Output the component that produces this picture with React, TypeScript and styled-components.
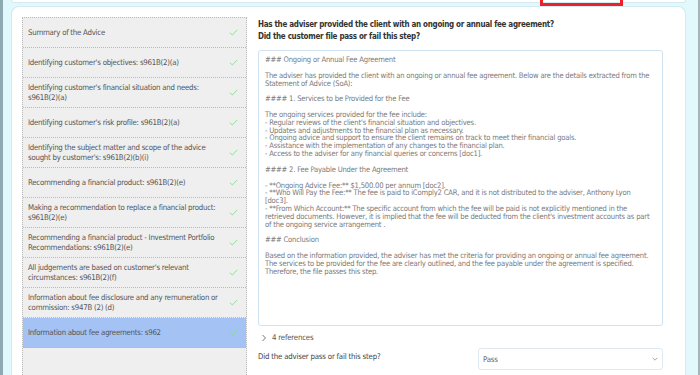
import React from 'react'
import styled, { createGlobalStyle } from 'styled-components';

const GlobalStyle = createGlobalStyle`
  html, body {
    margin: 0;
    padding: 0;
    height: 375px;
    overflow: hidden;
    background: #e1f8fc;
  }
  body {
    font-family: "Liberation Sans Narrow", "DejaVu Sans Condensed", "Liberation Sans", sans-serif;
  }
`

const steps = [
  'Summary of the Advice',
  "Identifying customer's objectives: s961B(2)(a)",
  "Identifying customer's  financial situation and needs: s961B(2)(a)",
  "Identifying customer's risk profile: s961B(2)(a)",
  "Identifying the subject matter and scope of the advice sought by customer's: s961B(2)(b)(i)",
  'Recommending a financial product: s961B(2)(e)',
  'Making a recommendation to replace a financial product: s961B(2)(e)',
  'Recommending a financial product - Investment Portfolio Recommendations: s961B(2)(e)',
  "All judgements are based on customer's relevant circumstances: s961B(2)(f)",
  'Information about fee disclosure and any remuneration or commission: s947B (2) (d)',
  'Information about fee agreements: s962',
]

const answer = `### Ongoing or Annual Fee Agreement

The adviser has provided the client with an ongoing or annual fee agreement. Below are the details extracted from the
Statement of Advice (SoA):

#### 1. Services to be Provided for the Fee

The ongoing services provided for the fee include:
- Regular reviews of the client's financial situation and objectives.
- Updates and adjustments to the financial plan as necessary.
- Ongoing advice and support to ensure the client remains on track to meet their financial goals.
- Assistance with the implementation of any changes to the financial plan.
- Access to the adviser for any financial queries or concerns [doc1].

#### 2. Fee Payable Under the Agreement

- **Ongoing Advice Fee:** $1,500.00 per annum [doc2].
- **Who Will Pay the Fee:** The fee is paid to iComply2 CAR, and it is not distributed to the adviser, Anthony Lyon
[doc3].
- **From Which Account:** The specific account from which the fee will be paid is not explicitly mentioned in the
retrieved documents. However, it is implied that the fee will be deducted from the client's investment accounts as part
of the ongoing service arrangement .

### Conclusion

Based on the information provided, the adviser has met the criteria for providing an ongoing or annual fee agreement.
The services to be provided for the fee are clearly outlined, and the fee payable under the agreement is specified.
Therefore, the file passes this step.`

function Check() {
  return (
    <svg width="9" height="7" viewBox="0 0 9 7">
      <path d="M0.8 3.6 L3.3 6 L8.3 0.8" fill="none" stroke="#86df8c" strokeWidth="0.9" />
    </svg>
  )
}

function App() {
  return (
    <>
      <GlobalStyle />
      <Page>
        <TopCard>
          <Highlight />
        </TopCard>
        <MainCard>
          <StepList>
            {steps.map((s, i) => (
              <Step key={i} $active={i === steps.length - 1}>
                <span>{s}</span>
                <Check />
              </Step>
            ))}
          </StepList>
          <Detail>
            <Question>
              Has the adviser provided the client with an ongoing or annual fee agreement?
              <br />
              Did the customer file pass or fail this step?
            </Question>
            <AnswerBox>{answer}</AnswerBox>
            <References>
              <svg width="6" height="8" viewBox="0 0 6 8">
                <path d="M1.5 1 L4.5 4 L1.5 7" fill="none" stroke="#666" strokeWidth="0.9" />
              </svg>
              4 references
            </References>
            <ResultRow>
              <span>Did the adviser pass or fail this step?</span>
              <Select>
                Pass
                <svg width="6" height="4" viewBox="0 0 6 4">
                  <path d="M0.6 0.8 L3 3.2 L5.4 0.8" fill="none" stroke="#999" strokeWidth="0.9" />
                </svg>
              </Select>
            </ResultRow>
          </Detail>
        </MainCard>
      </Page>
    </>
  )
}

export default App;

const Page = styled.div`
  height: 375px;
  box-sizing: border-box;
  overflow: hidden;
  display: flex;
  flex-direction: column;
  border-left: 3px solid #8ea9b2;
  border-right: 2px solid #a7b4b8;
  padding: 0 12px 0 8px;
  background: #e1f8fc;
`

const TopCard = styled.div`
  position: relative;
  height: 2px;
  flex-shrink: 0;
  background: #fff;
  border: 1px solid #d3ebf0;
  border-top: none;
  border-radius: 0 0 6px 6px;
`

const Highlight = styled.div`
  position: absolute;
  left: 528px;
  top: -3px;
  width: 77px;
  height: 6px;
  border: 3px solid #ec2029;
  border-top: none;
`

const MainCard = styled.div`
  margin-top: 3px;
  flex: 1;
  min-height: 0;
  box-sizing: border-box;
  background: #fff;
  border: 1px solid #d3ebf0;
  border-bottom: none;
  border-radius: 8px 8px 0 0;
  padding: 10px 22px 0 10px;
  display: flex;
  gap: 11px;
`

const StepList = styled.div`
  width: 225px;
  flex-shrink: 0;
  box-sizing: border-box;
  background: #efefef;
  border: 1px dotted #b9b9b9;
  border-bottom: none;
`

const Step = styled.div<{ $active?: boolean }>`
  height: 30px;
  box-sizing: border-box;
  border-bottom: 1px dotted #b9b9b9;
  padding: 0 8px 0 5px;
  display: flex;
  align-items: center;
  justify-content: space-between;
  gap: 10px;
  background: ${p => (p.$active ? '#a4c2f4' : 'transparent')};
  color: #555;
  font-size: 7.8px;
  letter-spacing: -0.25px;
  line-height: 10px;

  span {
    flex: 1;
  }

  svg {
    flex-shrink: 0;
  }
`

const Detail = styled.div`
  flex: 1;
  min-width: 0;
  display: flex;
  flex-direction: column;
`

const Question = styled.div`
  font-weight: bold;
  font-size: 8px;
  letter-spacing: -0.3px;
  line-height: 12px;
  color: #333;
  margin-top: 2px;
`

const AnswerBox = styled.div`
  margin-top: 7px;
  height: 276px;
  flex-shrink: 0;
  box-sizing: border-box;
  border: 1px solid #cfe2f2;
  border-radius: 3px;
  padding: 5px 6px;
  white-space: pre;
  overflow: hidden;
  color: #7a7a7a;
  font-size: 7.6px;
  letter-spacing: -0.2px;
  line-height: 7.85px;
`

const References = styled.div`
  display: flex;
  align-items: center;
  gap: 5px;
  margin-top: 7px;
  padding-left: 3px;
  color: #555;
  font-size: 7.8px;
  letter-spacing: -0.2px;
`

const ResultRow = styled.div`
  margin-top: 6px;
  display: flex;
  justify-content: space-between;
  align-items: flex-start;
  color: #444;
  font-size: 7.8px;
  letter-spacing: -0.2px;

  & > span {
    margin-top: 4px;
  }
`

const Select = styled.div`
  width: 185px;
  height: 22px;
  box-sizing: border-box;
  border: 1px solid #dfe9f1;
  border-radius: 3px;
  padding: 0 4px;
  display: flex;
  align-items: center;
  justify-content: space-between;
  color: #666;
  font-size: 7.8px;
`
